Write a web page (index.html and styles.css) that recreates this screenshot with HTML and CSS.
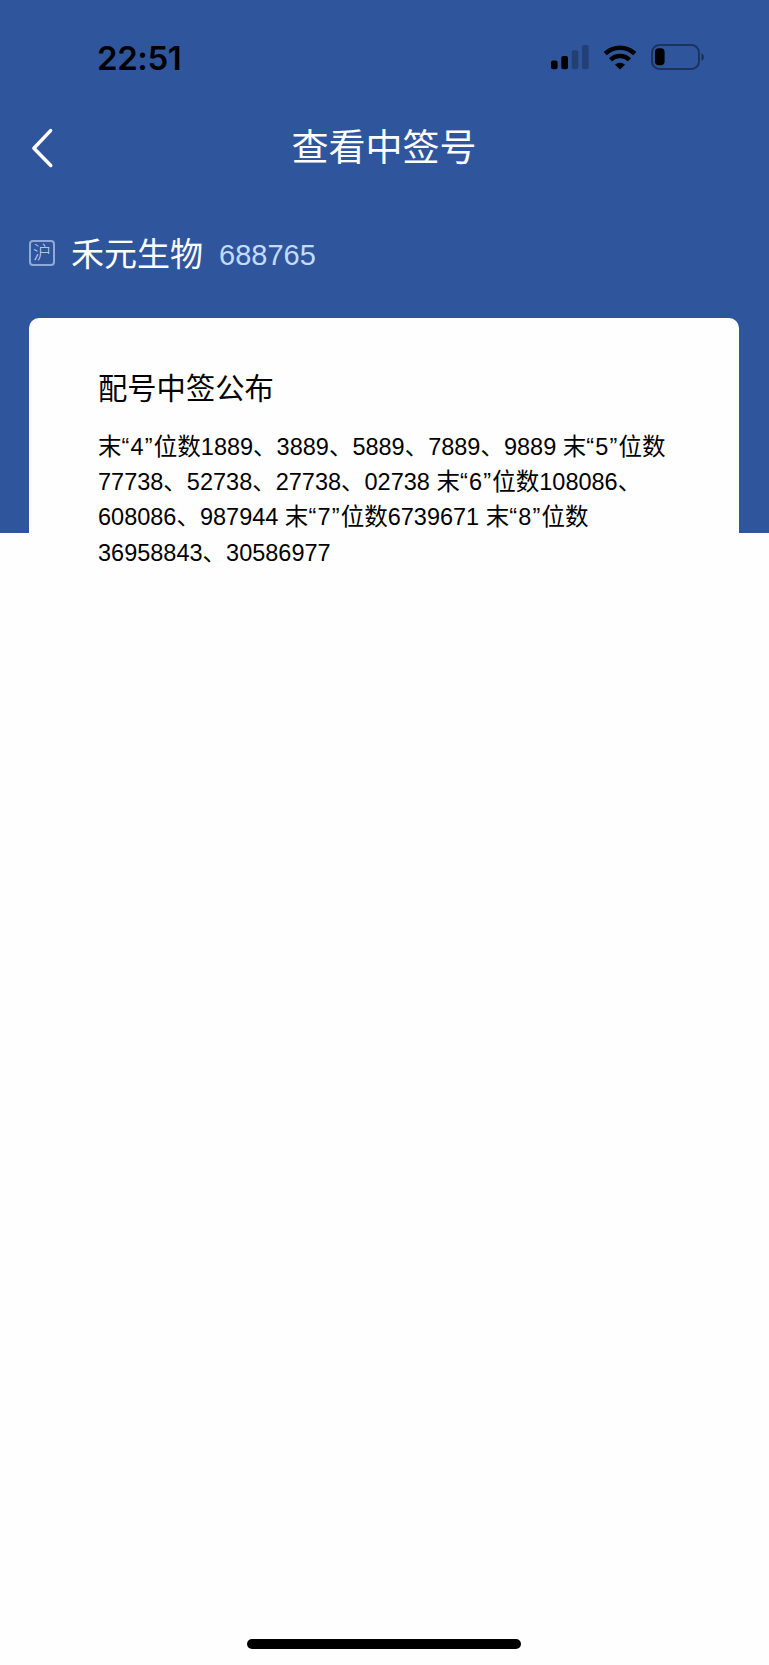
FILE: index.html
```
<!DOCTYPE html>
<html lang="zh-CN">
<head>
  <meta charset="UTF-8" />
  <meta name="viewport" content="width=device-width, initial-scale=1.0" />
  <title>查看中签号</title>
  <link rel="stylesheet" href="styles.css">
</head>
<body>

  <section class="hero">
    <div class="status-bar">
      <span class="time">22:51</span>
      <div class="status-icons">
        <svg class="signal" width="38" height="25" viewBox="0 0 38 25">
          <rect x="0" y="15.5" width="6.6" height="8.8" rx="2" />
          <rect x="10.3" y="11" width="6.7" height="13.3" rx="2" />
          <rect class="off" x="20.7" y="5.2" width="6.7" height="19.1" rx="2" />
          <rect class="off" x="31" y="0" width="6.7" height="24.3" rx="2" />
        </svg>
        <svg class="wifi" width="34" height="25" viewBox="0 0 34 25">
          <path class="arc" d="M2.2 8.6A21.5 21.5 0 0 1 31.8 8.6" />
          <path class="arc" d="M7.6 14.8A13.5 13.5 0 0 1 26.4 14.8" />
          <path d="M17 24.6L11.9 19.8A7.6 7.6 0 0 1 22.1 19.8Z" />
        </svg>
        <svg class="battery" width="54" height="26" viewBox="0 0 54 26">
          <rect class="case" x="1" y="1" width="47" height="24" rx="7.5" />
          <rect x="3.9" y="4.3" width="9.7" height="17" rx="4" />
          <path class="cap" d="M50.5 9.2C53.7 10.4 53.7 15.7 50.5 16.9Z" />
        </svg>
      </div>
    </div>

    <header class="nav-bar">
      <svg class="back" width="24" height="40" viewBox="0 0 24 40">
        <path d="M20.6 2.6L3.9 20.2L20.8 37.4" />
      </svg>
      <h1>查看中签号</h1>
    </header>

    <div class="stock">
      <span class="market">沪</span>
      <span class="stock-name">禾元生物</span>
      <span class="stock-code">688765</span>
    </div>

    <div class="card">
      <h2>配号中签公布</h2>
      <p>
        末<span class="digit">“4”</span>位数1889、3889、5889、7889、9889 末<span class="digit">“5”</span>位数<br>
        77738、52738、27738、02738 末<span class="digit">“6”</span>位数108086、<br>
        608086、987944 末<span class="digit">“7”</span>位数6739671 末<span class="digit">“8”</span>位数<br>
        36958843、30586977
      </p>
    </div>
  </section>

  <footer>
    <div class="home-indicator"></div>
  </footer>

</body>
</html>
```
FILE: styles.css
```
* {
  box-sizing: border-box;
}

body {
  margin: 0;
  height: 1665px;
  display: flex;
  flex-direction: column;
  justify-content: space-between;
  background: #fefefe;
  color: #000;
  font-family: "Liberation Sans", "Noto Sans CJK SC", sans-serif;
}

/* 蓝色背景高度固定，卡片超出底部 */
.hero {
  height: 533px;
  background: #2f569d;
}

.status-bar {
  height: 108px;
  padding: 6px 64px 0 97px;
  display: flex;
  align-items: center;
  justify-content: space-between;
}

.time {
  padding-top: 1px;
  font-family: Inter, sans-serif;
  font-size: 33px;
  font-weight: 600;
  letter-spacing: -0.4px;
}

.status-icons {
  display: flex;
  align-items: center;
}

.wifi {
  margin: 0 14px;
}

.off {
  opacity: 0.25;
}

.arc {
  fill: none;
  stroke: #000;
  stroke-width: 4.6;
}

.case {
  fill: none;
  stroke: #000;
  stroke-width: 2;
  opacity: 0.4;
}

.cap {
  opacity: 0.45;
}

.nav-bar {
  height: 80px;
  padding: 0 31px 0 30px;
  display: grid;
  grid-template-columns: 24px 1fr 24px;
  align-items: center;
  color: #fff;
}

.back path {
  fill: none;
  stroke: #fff;
  stroke-width: 3.5;
  stroke-linecap: round;
  stroke-linejoin: round;
}

.nav-bar h1 {
  margin: 2px 0 0;
  text-align: center;
  font-size: 37px;
  font-weight: 400;
  line-height: 50px;
}

.stock {
  height: 130px;
  padding: 2px 29px 0;
  display: flex;
  align-items: center;
  color: #fff;
}

.market {
  width: 26px;
  height: 26px;
  margin-bottom: 2px;
  border: 2px solid #8faad8;
  border-radius: 4px;
  color: #c3d8fb;
  font-size: 18px;
  font-weight: 300;
  line-height: 23px;
  text-align: center;
}

.stock-name {
  margin: 2px 0 0 16px;
  font-size: 33px;
  line-height: 48px;
}

.stock-code {
  margin: 3px 0 0 16px;
  color: #c3dbff;
  font-size: 29px;
}

.card {
  height: 280px;
  margin: 0 30px 0 29px;
  padding: 49px 0 0 69px;
  background: #fefefe;
  border-radius: 10px;
}

.card h2 {
  margin: 0;
  font-size: 29.3px;
  font-weight: 400;
  line-height: 44px;
}

.card p {
  margin: 19px 0 0;
  font-size: 23.5px;
  line-height: 35.2px;
  white-space: nowrap;
}

.digit {
  letter-spacing: 1.2px;
}

footer {
  padding: 0 1px 16px 0;
}

.home-indicator {
  width: 274px;
  height: 10px;
  margin: 0 auto;
  background: #000;
  border-radius: 5px;
}
```
